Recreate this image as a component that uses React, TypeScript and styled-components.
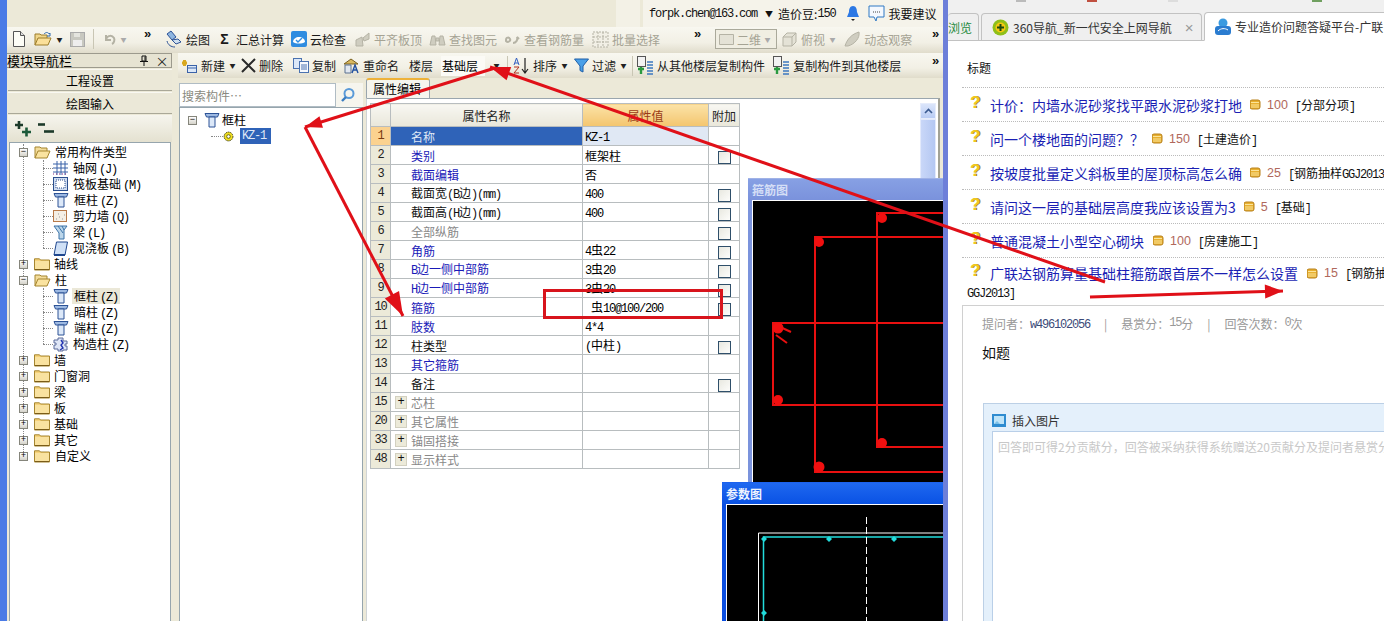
import React from "react";
import styled, { createGlobalStyle } from "styled-components";

const CJK = `"Noto Sans CJK SC", "Liberation Sans", sans-serif`;

const Global = createGlobalStyle`
  html, body { margin: 0; padding: 0; background: #fff; overflow: hidden; }
  body { font-family: ${CJK}; font-size: 12px; color: #000; }
  * { box-sizing: border-box; }
`;

const Page = styled.div`
  position: relative;
  display: flex;
  width: 1384px;
  height: 621px;
  overflow: hidden;
`;

const AppWindow = styled.div`
  position: relative;
  flex: 0 0 948px;
  display: flex;
  flex-direction: column;
  height: 621px;
  overflow: hidden;
  background: #ece9d8;
  border-left: 7px solid #4a7be6;
  border-right: 5px solid #6d7fd9;
`;

const TitleBar = styled.div`
  flex: 0 0 27px;
  display: flex;
  justify-content: flex-end;
  align-items: stretch;
`;

const TitleGhost = styled.div`
  width: 24px;
  margin-right: 3px;
  background: #f3f1e6;
`;

const Account = styled.div`
  width: 300px;
  padding: 0 6px;
  display: flex;
  align-items: center;
  background: #f5f3ea;
  color: #111;
  white-space: nowrap;
`;

const Latin = styled.span`
  font-family: "Liberation Mono", monospace;
  font-size: 12px;
  letter-spacing: -1.2px;
`;

const TreeKey = styled(Latin)`
  margin-left: 2px;
`;

const AccountCaret = styled.span`
  margin: 0 5px 0 8px;
  font-size: 8px;
`;

const AccountIcon = styled.span<{ $ml: number }>`
  display: inline-flex;
  margin-left: ${(p) => p.$ml}px;
  margin-right: 3px;
`;

const Toolbar = styled.div<{ $pad: number; $gap: number; $lift?: number }>`
  flex: 0 0 auto;
  display: flex;
  align-items: center;
  height: 26px;
  padding-left: ${(p) => p.$pad}px;
  padding-bottom: ${(p) => p.$lift ?? 0}px;
  gap: ${(p) => p.$gap}px;
  background: linear-gradient(#f8f7f0, #f2f0e5 60%, #e0dccb);
  white-space: nowrap;
  position: relative;
`;

const ToolItem = styled.span<{ $off?: boolean; $ml?: number }>`
  display: inline-flex;
  align-items: center;
  gap: 3px;
  height: 20px;
  margin-left: ${(p) => p.$ml ?? 0}px;
  color: ${(p) => (p.$off ? "#a5a394" : "#1a1a1a")};
`;

const SigmaGlyph = styled.span`
  flex: 0 0 11px;
  margin-right: 3px;
  font: 700 14px/14px "Liberation Sans", sans-serif;
  text-align: center;
`;

const Chevron = styled.span<{ $at: number; $top: number }>`
  position: absolute;
  left: ${(p) => p.$at}px;
  top: ${(p) => p.$top}px;
  font-size: 13px;
  font-weight: 700;
  line-height: 12px;
  color: #111;
  font-family: "Liberation Sans", sans-serif;
`;

const Caret = styled.span<{ $off?: boolean }>`
  flex: 0 0 7px;
  width: 7px;
  font-size: 6px;
  margin-left: 1px;
  text-align: center;
  color: ${(p) => (p.$off ? "#aaa" : "#222")};
`;

const ToolSep = styled.span<{ $ml?: number }>`
  width: 1px;
  height: 20px;
  margin-left: ${(p) => p.$ml ?? 0}px;
  background: #c9c6b4;
`;

const ViewSelect = styled.span`
  display: inline-flex;
  align-items: center;
  width: 62px;
  height: 20px;
  padding: 0 2px;
  gap: 2px;
  color: #a5a394;
  border: 1px solid #aaa99a;
  background: #f0eee2;
`;

const FloorBox = styled.span`
  display: inline-flex;
  align-items: center;
  width: 44px;
  height: 20px;
  margin-left: 1px;
  padding-left: 1px;
  background: #fbfaf5;
`;

const Body = styled.div`
  flex: 1;
  display: flex;
  min-height: 0;
`;

const Nav = styled.div`
  flex: 0 0 165px;
  display: flex;
  flex-direction: column;
`;

const NavHeader = styled.div`
  flex: 0 0 15px;
  display: flex;
  align-items: center;
  margin-bottom: 1px;
  padding-right: 0;
  border: 1px solid #9c9a8d;
  border-left: 0;
  font-size: 13px;
  line-height: 13px;
  background: #e6e3d2;
`;

const NavHeaderTitle = styled.span`
  flex: 1;
`;

const NavHeaderGlyph = styled.span`
  display: inline-flex;
  width: 18px;
  justify-content: center;
  color: #222;
`;

const NavButton = styled.div<{ $h: number }>`
  flex: 0 0 ${(p) => p.$h}px;
  margin-left: 1px;
  margin-bottom: 1px;
  display: flex;
  align-items: center;
  justify-content: center;
  font-size: 12px;
  background: #ebe8d8;
  border-bottom: 1px solid #aaa898;
  border-top: 1px solid #f9f8f2;
`;

const NavTools = styled.div`
  flex: 0 0 27px;
  margin-left: 1px;
  padding-left: 6px;
  display: flex;
  align-items: center;
  gap: 5px;
  background: linear-gradient(#f6f5ee, #e4e1d0);
`;

const TreeBox = styled.div`
  flex: 1;
  margin-left: 2px;
  margin-right: 1px;
  padding-top: 1px;
  background: #fff;
  border: 1px solid #96a5ad;
  border-bottom: 0;
`;

const TreeGroup = styled.div<{ $x: number }>`
  position: relative;
  &::before {
    content: "";
    position: absolute;
    left: ${(p) => p.$x}px;
    top: 0;
    bottom: 8px;
    border-left: 1px dotted #888;
  }
`;

const TreeRow = styled.div<{ $indent: number }>`
  position: relative;
  display: flex;
  align-items: center;
  height: 16px;
  padding-left: ${(p) => p.$indent}px;
  white-space: nowrap;
`;

const TreeBranch = styled.span<{ $len: number }>`
  width: ${(p) => p.$len}px;
  margin-left: -${(p) => p.$len}px;
  border-top: 1px dotted #888;
`;

const Expander = styled.span`
  flex: 0 0 9px;
  height: 9px;
  display: inline-flex;
  align-items: center;
  justify-content: center;
  position: relative;
  font: 9px/9px "Liberation Mono", monospace;
  background: linear-gradient(#fff, #d5d3ca);
  border: 1px solid #85857b;
  color: #000;
`;

const TreeLabel = styled.span<{ $ml: number; $hit?: boolean }>`
  margin-left: ${(p) => p.$ml}px;
  padding: 0 2px;
  height: 16px;
  line-height: 16px;
  background: ${(p) => (p.$hit ? "#ebe8d8" : "transparent")};
`;

const IconSlot = styled.span<{ $ml: number }>`
  display: inline-flex;
  margin-left: ${(p) => p.$ml}px;
`;

const Main = styled.div`
  flex: 1;
  display: flex;
  flex-direction: column;
  min-width: 0;
`;

const SecondToolbar = styled(Toolbar)`
  height: 25px;
  margin-left: 6px;
`;

const Workspace = styled.div`
  flex: 1;
  display: flex;
  min-height: 0;
`;

const Components = styled.div`
  flex: 0 0 184px;
  margin-left: 7px;
  margin-top: 5px;
  display: flex;
  flex-direction: column;
`;

const SearchRow = styled.div`
  flex: 0 0 24px;
  display: flex;
  align-items: center;
  background: #f6f5ee;
`;

const SearchInput = styled.div`
  width: 157px;
  height: 24px;
  padding-left: 2px;
  display: flex;
  align-items: center;
  color: #8a8a80;
  background: #fff;
  border: 1px solid #b0bcc4;
`;

const SearchButton = styled.span`
  margin-left: 4px;
  display: inline-flex;
`;

const ComponentTree = styled.div`
  flex: 1;
  padding-top: 4px;
  background: #fff;
  border: 1px solid #96a5ad;
  border-bottom: 0;
`;

const SelectedLabel = styled.span`
  margin-left: 6px;
  width: 31px;
  height: 16px;
  padding-left: 2px;
  display: flex;
  align-items: center;
  background: #2f63b8;
  color: #dfe8f6;
`;

const PropsPanel = styled.div`
  flex: 1;
  margin-left: 3px;
  margin-right: 3px;
  display: flex;
  flex-direction: column;
  min-width: 0;
`;

const TabRow = styled.div`
  flex: 0 0 20px;
  display: flex;
  align-items: flex-end;
`;

const PropsTab = styled.div`
  width: 64px;
  height: 20px;
  padding-left: 6px;
  line-height: 18px;
  background: #f6f5ee;
  border: 1px solid #9aa6ae;
  border-top: 2px solid #eeb23a;
  border-bottom: 0;
  border-radius: 3px 3px 0 0;
`;

const PropsBody = styled.div`
  position: relative;
  flex: 1;
  padding: 4px 0 0 3px;
  background: #fff;
  border-top: 1px solid #9aa6ae;
  border-left: 1px solid #d0d4d6;
  border-right: 2px solid #a2a296;
`;

const PropsTable = styled.table`
  width: 369px;
  table-layout: fixed;
  border-collapse: collapse;
  border: 1px solid #aab4ba;
  font-size: 12px;
  td, th {
    height: 19px;
    padding: 0;
    border: 1px solid #b8bdbf;
    font-weight: 400;
    overflow: hidden;
    white-space: nowrap;
  }
`;

const HeadCell = styled.th<{ $hot?: boolean }>`
  height: 23px !important;
  text-align: center;
  background: ${(p) => (p.$hot ? "linear-gradient(#fbe3a8, #f4c56e)" : "linear-gradient(#f8f7f2, #e9e7da)")};
  color: ${(p) => (p.$hot ? "#9a3b17" : "#222")};
`;

const NumCell = styled.td<{ $hot?: boolean }>`
  text-align: center;
  background: ${(p) => (p.$hot ? "#fbd28f" : "#ecead9")};
  font-family: "Liberation Mono", monospace;
  font-size: 12px;
  letter-spacing: -1.2px;
  color: ${(p) => (p.$hot ? "#7a3b10" : "#222")};
`;

const NameCell = styled.td<{ $tone: string; $sel?: boolean }>`
  padding-left: 20px !important;
  background: ${(p) => (p.$sel ? "#2f63b8" : "#fff")};
  color: ${(p) => (p.$sel ? "#dfe8f6" : p.$tone)};
`;

const NameInner = styled.span`
  display: flex;
  align-items: center;
  gap: 4px;
  margin-left: -16px;
`;

const PlusBox = styled.span`
  width: 12px;
  height: 13px;
  display: inline-flex;
  align-items: center;
  justify-content: center;
  font: 12px/12px "Liberation Mono", monospace;
  color: #111;
  background: #ecead9;
  border: 1px solid #d2d0c0;
`;

const ValueCell = styled.td<{ $sel?: boolean }>`
  padding-left: 2px !important;
  white-space: pre !important;
  background: ${(p) => (p.$sel ? "#e0e8f4" : "#fff")};
`;

const CheckCell = styled.td`
  text-align: center;
`;

const CheckBox = styled.span`
  display: inline-block;
  vertical-align: middle;
  width: 13px;
  height: 13px;
  background: linear-gradient(135deg, #e8e8e0, #fdfdfb);
  border: 1px solid #2f4f6a;
`;

const Scrollbar = styled.div`
  position: absolute;
  right: 2px;
  top: 4px;
  width: 16px;
  bottom: 0;
  display: flex;
  flex-direction: column;
  background: #f3f6fd;
`;

const ScrollArrow = styled.div`
  height: 16px;
  display: flex;
  align-items: center;
  justify-content: center;
  background: linear-gradient(#dbe5fb, #b9ccf4);
  border: 1px solid #e6ecfb;
`;

const ScrollThumb = styled.div`
  height: 66px;
  background: linear-gradient(90deg, #c9d7f8, #b4c7f2);
  border: 1px solid #e2e9fb;
`;

const FloatWindow = styled.div<{ $x: number; $y: number; $active?: boolean }>`
  position: absolute;
  left: ${(p) => p.$x}px;
  top: ${(p) => p.$y}px;
  right: -40px;
  bottom: -40px;
  padding: 0 4px 4px;
  background: ${(p) => (p.$active ? "#0a4ee0" : "#7b93dc")};
  border-top: 1px solid ${(p) => (p.$active ? "#1c62ee" : "#a0b2e6")};
`;

const FloatTitle = styled.div<{ $active?: boolean }>`
  height: 21px;
  display: flex;
  align-items: center;
  font-size: 12px;
  font-weight: 700;
  color: ${(p) => (p.$active ? "#eef3ff" : "#d4def6")};
  background: ${(p) => (p.$active ? "linear-gradient(#1f68f0, #0a52e4)" : "linear-gradient(#87a0e4, #7a92dc)")};
  margin: 0 -4px;
  padding-left: 4px;
`;

const FloatCanvas = styled.svg`
  display: block;
  background: #000;
  outline: 1px solid #fff;
  outline-offset: -1px;
`;

const Browser = styled.div`
  flex: 1;
  display: flex;
  flex-direction: column;
  min-width: 0;
  overflow: hidden;
  background: #fff;
`;

const BrowserStrip = styled.div`
  flex: 0 0 12px;
  background: #f0f0f0;
  position: relative;
`;

const StripTip = styled.span<{ $x: number; $c: string }>`
  position: absolute;
  left: ${(p) => p.$x}px;
  top: 0;
  width: 10px;
  height: 2px;
  background: ${(p) => p.$c};
`;

const TabStrip = styled.div`
  flex: 0 0 28px;
  display: flex;
  align-items: flex-end;
  gap: 2px;
  background: #f0f0f0;
  border-bottom: 1px solid #c2c2c2;
  white-space: nowrap;
`;

const BrowserTab = styled.div<{ $w: number; $on?: boolean; $green?: boolean }>`
  flex: 0 0 ${(p) => p.$w}px;
  padding-left: ${(p) => (p.$green ? 0 : 10)}px;
  display: flex;
  align-items: center;
  gap: 4px;
  overflow: hidden;
  font-size: 12px;
  color: ${(p) => (p.$green ? "#1e8a3c" : "#333")};
  background: ${(p) => (p.$on ? "#fff" : "#efefef")};
  border: 1px solid #c2c2c2;
  border-left: ${(p) => (p.$green ? 0 : "1px solid #c2c2c2")};
  border-bottom: ${(p) => (p.$on ? "1px solid #fff" : "0")};
  border-radius: 4px 4px 0 0;
  margin-bottom: ${(p) => (p.$on ? "-1px" : 0)};
  height: ${(p) => (p.$on ? "29px" : "27px")};
`;

const TabClose = styled.span`
  margin-left: 9px;
  font-size: 15px;
  color: #999;
  font-family: "Liberation Sans", sans-serif;
`;

const Content = styled.div`
  flex: 0 0 auto;
  width: 470px;
  padding-left: 14px;
`;

const ListHeader = styled.div`
  height: 47px;
  padding: 18px 0 0 5px;
  line-height: 17px;
  color: #111;
  border-bottom: 1px dotted #bbb;
`;

const QRow = styled.div<{ $last?: boolean }>`
  height: ${(p) => (p.$last ? 30 : 34)}px;
  display: flex;
  align-items: center;
  white-space: nowrap;
  padding-left: 8px;
  border-bottom: ${(p) => (p.$last ? "0" : "1px dotted #bbb")};
`;

const QMark = styled.span`
  flex: 0 0 20px;
  margin-top: -5px;
  font: 700 17px/17px "Liberation Sans", sans-serif;
  color: #f0c820;
  text-shadow: 1px 0 0 #8a7210;
`;

const QLink = styled.span`
  font-size: 14px;
  color: #1b1fb4;
`;

const Coin = styled.span<{ $ml: number }>`
  display: inline-flex;
  margin-left: ${(p) => p.$ml}px;
`;

const Score = styled.span`
  margin-left: 6px;
  font: 12.5px "Liberation Sans", sans-serif;
  color: #b0685c;
`;

const Category = styled.span`
  margin-left: 7px;
  color: #111;
`;

const WrapLine = styled.div`
  height: 20px;
  margin-top: -3px;
  padding-left: 5px;
  line-height: 14px;
  color: #111;
`;

const Answer = styled.div`
  height: 340px;
  padding: 9px 0 0 19px;
  border-top: 1px solid #d0d0d0;
  border-left: 1px solid #d0d0d0;
`;

const Meta = styled.div`
  display: flex;
  align-items: center;
  height: 16px;
  color: #999;
  white-space: pre;
`;

const MetaName = styled.span`
  color: #3b4a78;
`;

const MetaSep = styled.span`
  margin: 0 14px;
`;

const Ask = styled.div`
  margin-top: 11px;
  font-size: 14px;
  line-height: 20px;
  color: #111;
`;

const Reply = styled.div`
  margin-top: 41px;
  margin-left: 1px;
  height: 260px;
  padding: 0 0 0 8px;
  background: #e4f0fb;
  border: 1px solid #bcd0e6;
`;

const ReplyBar = styled.div`
  height: 27px;
  padding-top: 6px;
  display: flex;
  align-items: center;
  gap: 6px;
  color: #333;
`;

const ReplyBox = styled.div`
  height: 240px;
  padding: 6px 0 0 5px;
  line-height: 17px;
  color: #c8c8c8;
  background: #fff;
  border: 1px solid #b9cfe8;
  overflow: hidden;
  white-space: nowrap;
`;

const Overlay = styled.svg`
  position: absolute;
  left: 0;
  top: 0;
  pointer-events: none;
`;

const Callout = styled.div`
  position: absolute;
  left: 543px;
  top: 289px;
  width: 180px;
  height: 30px;
  border: 3px solid #d8141c;
`;

/* ---------- icons ---------- */

const Column = ({ s = 16 }: { s?: number }) => (
  <svg width={s} height={s} viewBox="0 0 16 16">
    <path d="M1 1.5h14l-1.5 3.5h-11z" fill="#9db9e2" stroke="#2c5296" />
    <path d="M5 5h6v10H5z" fill="#dce8f8" stroke="#2c5296" />
  </svg>
);

const Folder = () => (
  <svg width={16} height={14} viewBox="0 0 16 14">
    <path d="M.5 3V1.8h5l1 1.2h9v10H.5z" fill="#f6d27a" stroke="#a5852f" />
    <path d="M1 4h14v8H1z" fill="#f9e2a0" />
    <path d="M1 12h14v1H1z" fill="#7a5c18" />
  </svg>
);

const FolderOpen = () => (
  <svg width={17} height={14} viewBox="0 0 17 14">
    <path d="M1 13V2h5l1 1h6v3" fill="#f3dc9a" stroke="#a5852f" />
    <path d="M1 13l3-7h12l-3 7z" fill="#fae3a0" stroke="#a5852f" />
  </svg>
);

const AxisGrid = () => (
  <svg width={15} height={14} viewBox="0 0 15 14" stroke="#3a62a8" fill="none">
    <path d="M4 0v14M8 0v14M12 0v14M0 3h15M0 7h15M0 11h15" />
    <path d="M0 13h14" stroke="#8a2a80" strokeDasharray="1 2" />
  </svg>
);

const Raft = () => (
  <svg width={15} height={14} viewBox="0 0 15 14">
    <rect x=".5" y=".5" width="14" height="13" fill="#cfdcf0" stroke="#2c4f8e" />
    <rect x="3" y="3" width="9" height="8" fill="#fff" stroke="#2c4f8e" strokeDasharray="1 1" />
  </svg>
);

const Wall = () => (
  <svg width={15} height={14} viewBox="0 0 15 14">
    <rect x=".5" y="1.5" width="13" height="11" fill="#f4efe6" stroke="#b87a4a" />
    <path d="M3 10h1M6 8h1M9 10h1M11 6h1M5 5h1" stroke="#999" />
  </svg>
);

const Beam = () => (
  <svg width={15} height={15} viewBox="0 0 15 15">
    <path d="M1 1h13l-3 4v9H6V8z" fill="#bcd6ea" stroke="#3a72a8" />
    <path d="M5 1l5 7M9 1l2 4" stroke="#3a72a8" fill="none" />
  </svg>
);

const Slab = () => (
  <svg width={15} height={15} viewBox="0 0 15 15">
    <path d="M3.5 1h11l-2.5 13H1z" fill="#cfe0f6" stroke="#1f478e" />
    <path d="M1 14h11" stroke="#1f478e" strokeWidth="2" />
  </svg>
);

const Constructed = () => (
  <svg width={15} height={15} viewBox="0 0 15 15">
    <path d="M5 1h5v3h4v3h-2v2h2v4h-4v1H5v-2H1V8h2V6H1V3h4z" fill="#dfe6f6" stroke="#5a6a9a" />
    <path d="M8 3l2 3-2 2 2 3-3 2" stroke="#2233b0" fill="none" strokeWidth="1.4" />
  </svg>
);

const Gear = () => (
  <svg width={11} height={11} viewBox="0 0 11 11">
    <circle cx="5.5" cy="5.5" r="4.4" fill="#f2e020" stroke="#3a3a10" strokeDasharray="1.4 0.8" />
    <circle cx="5.5" cy="5.5" r="1.8" fill="#fff" stroke="#6a6a10" />
  </svg>
);

const Plus = ({ minus }: { minus?: boolean }) => (
  <svg width={18} height={17} viewBox="0 0 18 17">
    {minus ? (
      <>
        <path d="M1 4.5h7" stroke="#1d3a2a" strokeWidth="2.6" />
        <path d="M7 11.5h10" stroke="#1d3a2a" strokeWidth="2.6" />
      </>
    ) : (
      <>
        <path d="M1 5h8M5 1v8" stroke="#1d3a2a" strokeWidth="2.6" />
        <path d="M8 12h9M12.5 7.5v9" stroke="#1d5a3a" strokeWidth="2.6" />
      </>
    )}
  </svg>
);

const Pin = () => (
  <svg width={10} height={12} viewBox="0 0 10 12" fill="none" stroke="#111">
    <path d="M3 1h4v5H3zM1 6.5h8M5 7v4" />
    <path d="M6 1.5v4" />
  </svg>
);

const Page16 = () => (
  <svg width={14} height={16} viewBox="0 0 14 16">
    <path d="M1.5.5h7l4 4v11h-11z" fill="#fdfdf6" stroke="#555" />
    <path d="M8.5.5v4h4" fill="#ddd" stroke="#555" />
  </svg>
);

const OpenDoc = () => (
  <svg width={18} height={16} viewBox="0 0 18 16">
    <path d="M1 14V3h5l1 1h6v3" fill="#f0d68a" stroke="#9c7d2a" />
    <path d="M1 14l3-7h13l-3 7z" fill="#fbe09a" stroke="#9c7d2a" />
    <path d="M10 3c2-2 4-2 5 0l1-1v3h-3" stroke="#2f6ab0" fill="none" />
  </svg>
);

const Floppy = () => (
  <svg width={15} height={15} viewBox="0 0 15 15">
    <rect x=".5" y=".5" width="14" height="14" fill="#c8c8c0" stroke="#aaa" />
    <rect x="3" y="8" width="9" height="6" fill="#eee" />
    <rect x="4" y="1" width="6" height="4" fill="#e4e4de" />
  </svg>
);

const Undo = () => (
  <svg width={14} height={14} viewBox="0 0 14 14" fill="none" stroke="#b4b2a4" strokeWidth="2">
    <path d="M4 3v5h5M4 7c2-4 6-4 8-1 1 2 0 5-2 6" />
  </svg>
);

const DrawTool = () => (
  <svg width={18} height={18} viewBox="0 0 18 18">
    <path d="M2 4l4-3 5 6-4 3z" fill="#8fb6e0" stroke="#2c5296" />
    <path d="M7 10l4 4 5-2-3-3z" fill="#cfe0f0" stroke="#2c5296" />
    <path d="M2 11c1 4 4 6 8 6" stroke="#2c5296" fill="none" />
  </svg>
);

const CloudCheck = () => (
  <svg width={16} height={16} viewBox="0 0 16 16">
    <rect width="16" height="16" rx="2" fill="#2f8ce0" />
    <path d="M2 11c0-3 3-5 6-5s6 2 6 5c-3 2-9 2-12 0z" fill="#fff" />
    <path d="M5 9l2 2 4-4" stroke="#2f8ce0" strokeWidth="1.4" fill="none" />
  </svg>
);

const Ghost = ({ kind }: { kind: "roof" | "bino" | "link" | "grid" | "box" | "orbit" | "panel" }) => (
  <svg width={17} height={17} viewBox="0 0 17 17" fill="#cfcdc0" stroke="#b5b3a5">
    {kind === "roof" && <path d="M2 15V9l6-3 1 9zM9 7l6-5v6l-5 2z" />}
    {kind === "bino" && <path d="M1 14l2-9h3l1 9zM10 14l1-9h3l2 9zM7 7h3v3H7z" />}
    {kind === "link" && <path d="M2 9c0-3 3-3 4-1 1 2-2 4-4 2zM9 12c3 0 5-3 4-6l2 2" fill="none" strokeWidth="2" />}
    {kind === "grid" && <path d="M1 1h15v15H1zM1 6h15M1 11h15M6 1v15M11 1v15" fill="#f2f0e6" strokeDasharray="2 1" />}
    {kind === "box" && <path d="M2 6l4-4h9v9l-4 4H2zM2 6h9v9M11 6l4-4" fill="#e4e2d6" />}
    {kind === "orbit" && <path d="M1 15C3 8 8 3 15 1c1 6-4 12-11 14z" />}
    {kind === "panel" && <path d="M1.5 3.5h14v10h-14z" fill="#e4e2d6" />}
  </svg>
);

const Bell = () => (
  <svg width={14} height={17} viewBox="0 0 14 17">
    <path d="M7 1c3 0 4 3 4 6l2 5H1l2-5c0-3 1-6 4-6z" fill="#2c78e4" />
    <path d="M5 14h4l-2 2z" fill="#222" />
  </svg>
);

const Speech = () => (
  <svg width={17} height={17} viewBox="0 0 17 17">
    <path d="M1 1h15v11h-7l-1 4-2-4H1z" fill="#f4f8fe" stroke="#2f78c4" />
    <path d="M5 7h7" stroke="#444" strokeDasharray="1 1" />
  </svg>
);

const NewItem = () => (
  <svg width={18} height={17} viewBox="0 0 18 17">
    <path d="M2 6h5M4.5 3v6" stroke="#d8a820" strokeWidth="3" />
    <rect x="7.5" y="8.5" width="9" height="7" fill="#dce8f8" stroke="#3a62a8" />
    <path d="M8 11h8" stroke="#3a62a8" />
  </svg>
);

const BigX = () => (
  <svg width={15} height={15} viewBox="0 0 15 15">
    <path d="M1 1l13 13M14 1L1 14" stroke="#2a2a2a" strokeWidth="2" />
  </svg>
);

const CopyIcon = () => (
  <svg width={16} height={15} viewBox="0 0 16 15">
    <rect x=".5" y=".5" width="8" height="10" fill="#dce8f8" stroke="#4a72b0" />
    <rect x="6.5" y="3.5" width="9" height="11" fill="#f6f9fe" stroke="#4a72b0" />
    <path d="M8 7h6M8 9h6M8 11h6" stroke="#4a72b0" />
  </svg>
);

const Rename = () => (
  <svg width={17} height={17} viewBox="0 0 17 17">
    <path d="M1 7l7-5 7 5z" fill="#d8b860" stroke="#7a6020" />
    <path d="M2 8h6v8H2z" fill="#e2e8f0" stroke="#5a7090" />
    <path d="M9 16l3-8 3 8M10 13h4" stroke="#1f4fa0" strokeWidth="1.4" fill="none" />
  </svg>
);

const SortIcon = () => (
  <svg width={17} height={17} viewBox="0 0 17 17" fill="none">
    <path d="M1 8l2.5-7L6 8M2 6h3" stroke="#2f5cc0" />
    <path d="M1 10h5L1 16h5" stroke="#b03020" />
    <path d="M12 1v14M9 12l3 4 3-4" stroke="#222" strokeWidth="1.2" />
  </svg>
);

const Funnel = () => (
  <svg width={15} height={15} viewBox="0 0 15 15">
    <path d="M.5 1h14L9 8v6l-3-1.5V8z" fill="#4aa0e8" stroke="#1f5fa8" />
  </svg>
);

const CopyFloor = () => (
  <svg width={18} height={19} viewBox="0 0 18 19">
    <rect x="1.5" y=".5" width="8" height="10" fill="#f2f2f2" stroke="#555" />
    <path d="M2 13h6M5 11v7" stroke="#2a9a40" strokeWidth="2.4" />
    <path d="M11 6h6M11 9h6M11 12h6M11 15h6M11 18h6" stroke="#3c78c0" strokeWidth="1.6" />
  </svg>
);

const Glass = () => (
  <svg width={16} height={16} viewBox="0 0 16 16" fill="none">
    <circle cx="9" cy="6.5" r="4.5" stroke="#5a9ad8" strokeWidth="2" />
    <path d="M6 10l-4 4" stroke="#3a7cc0" strokeWidth="2.4" />
  </svg>
);

const Badge360 = () => (
  <svg width={17} height={17} viewBox="0 0 17 17">
    <circle cx="8.5" cy="8.5" r="8" fill="#8fbf18" />
    <circle cx="8.5" cy="8.5" r="5" fill="#f5c810" />
    <path d="M8.5 5v7M5 8.5h7" stroke="#1c4a10" strokeWidth="2" />
  </svg>
);

const BadgeGld = () => (
  <svg width={16} height={17} viewBox="0 0 16 17">
    <circle cx="8" cy="5" r="4.5" fill="#3a9ae0" />
    <rect y="8" width="16" height="9" rx="3" fill="#2a7cd0" />
    <path d="M3 13c3-3 7-3 10-1" stroke="#fff" fill="none" />
  </svg>
);

const CoinStack = () => (
  <svg width={11} height={11} viewBox="0 0 11 11">
    <rect y="1" width="10" height="9" rx="2" fill="#e8b030" />
    <path d="M1 3.5h8M1 6h8M1 8h8" stroke="#fbe49a" />
    <rect y="1" width="10" height="9" rx="2" fill="none" stroke="#b8801a" />
  </svg>
);

const PicIcon = () => (
  <svg width={14} height={13} viewBox="0 0 14 13">
    <rect width="14" height="13" fill="#2f8cd0" />
    <rect x="2" y="2" width="10" height="8" fill="#bfe4f8" />
    <path d="M2 10l3-3 3 3" fill="#7cc0e8" />
  </svg>
);

/* ---------- annotation arrows ---------- */

const arrowHead = (x1: number, y1: number, x2: number, y2: number, len: number, half: number) => {
  const d = Math.hypot(x2 - x1, y2 - y1);
  const ux = (x2 - x1) / d;
  const uy = (y2 - y1) / d;
  const bx = x2 - ux * len;
  const by = y2 - uy * len;
  return `${x2},${y2} ${bx - uy * half},${by + ux * half} ${bx + uy * half},${by - ux * half}`;
};

const arrows = [
  { a: [1105, 282, 490, 67], len: 20, half: 7 },
  { a: [495, 68, 305, 127], len: 17, half: 6 },
  { a: [305, 127, 403, 316], len: 24, half: 8 },
  { a: [1090, 297, 1283, 291], len: 18, half: 7 },
];

/* ---------- data ---------- */

const BLUE = "#1a1ab8";
const GRAY = "#888";
const BLACK = "#111";

type Prop = { n: number; name: string; tone: string; value?: string; check?: boolean; expand?: boolean };

const props: Prop[] = [
  { n: 1, name: "名称", tone: BLUE, value: "KZ-1" },
  { n: 2, name: "类别", tone: BLUE, value: "框架柱", check: true },
  { n: 3, name: "截面编辑", tone: BLUE, value: "否" },
  { n: 4, name: "截面宽(B边)(mm)", tone: BLACK, value: "400", check: true },
  { n: 5, name: "截面高(H边)(mm)", tone: BLACK, value: "400", check: true },
  { n: 6, name: "全部纵筋", tone: GRAY, check: true },
  { n: 7, name: "角筋", tone: BLUE, value: "4虫22", check: true },
  { n: 8, name: "B边一侧中部筋", tone: BLUE, value: "3虫20", check: true },
  { n: 9, name: "H边一侧中部筋", tone: BLUE, value: "3虫20", check: true },
  { n: 10, name: "箍筋", tone: BLUE, value: " 虫10@100/200", check: true },
  { n: 11, name: "肢数", tone: BLUE, value: "4*4" },
  { n: 12, name: "柱类型", tone: BLACK, value: "(中柱)", check: true },
  { n: 13, name: "其它箍筋", tone: BLUE },
  { n: 14, name: "备注", tone: BLACK, check: true },
  { n: 15, name: "芯柱", tone: GRAY, expand: true },
  { n: 20, name: "其它属性", tone: GRAY, expand: true },
  { n: 33, name: "锚固搭接", tone: GRAY, expand: true },
  { n: 48, name: "显示样式", tone: GRAY, expand: true },
];

const questions = [
  { t: "计价：内墙水泥砂浆找平跟水泥砂浆打地", s: "100", c: "[分部分项]", gap: 8 },
  { t: "问一个楼地面的问题？？", s: "150", c: "[土建造价]", gap: 8 },
  { t: "按坡度批量定义斜板里的屋顶标高怎么确", s: "25", c: "[钢筋抽样GGJ2013]", gap: 8 },
  { t: "请问这一层的基础层高度我应该设置为3", s: "5", c: "[基础]", gap: 8 },
  { t: "普通混凝土小型空心砌块", s: "100", c: "[房建施工]", gap: 9 },
];

/* Text in the reference mixes a wide CJK face with a narrow Latin one. */
const Mixed = ({ text }: { text?: string }) => (
  <>
    {(text ?? "").split(/([\x00-\x7f]+)/).map((part, i) =>
      i % 2 === 1 ? <Latin key={i}>{part}</Latin> : part,
    )}
  </>
);

const Child = ({ icon, zh, k, hit }: { icon: React.ReactNode; zh: string; k: string; hit?: boolean }) => (
  <TreeRow $indent={43}>
    <TreeBranch $len={10} />
    {icon}
    <TreeLabel $ml={3} $hit={hit}>
      {zh}
      <TreeKey>({k})</TreeKey>
    </TreeLabel>
  </TreeRow>
);

const Top = ({ zh, open, ml = 2 }: { zh: string; open?: boolean; ml?: number }) => (
  <TreeRow $indent={9}>
    <Expander>{open ? "−" : "+"}</Expander>
    <IconSlot $ml={6}>{open ? <FolderOpen /> : <Folder />}</IconSlot>
    <TreeLabel $ml={ml}>{zh}</TreeLabel>
  </TreeRow>
);

export default function App() {
  return (
    <>
      <Global />
      <Page>
        <AppWindow>
          <TitleBar>
            <TitleGhost />
            <Account>
              <Latin>forpk.chen@163.com</Latin>
              <AccountCaret>▼</AccountCaret>
              造价豆:<Latin>150</Latin>
              <AccountIcon $ml={11}>
                <Bell />
              </AccountIcon>
              <AccountIcon $ml={5}>
                <Speech />
              </AccountIcon>
              我要建议
            </Account>
          </TitleBar>

          <Toolbar $pad={5} $gap={8} $lift={2}>
            <ToolItem><Page16 /></ToolItem>
            <ToolItem><OpenDoc /><Caret>▼</Caret></ToolItem>
            <ToolItem $ml={-1}><Floppy /></ToolItem>
            <ToolSep />
            <ToolItem><Undo /><Caret $off>▼</Caret></ToolItem>
            <ToolItem $ml={30}><DrawTool />绘图</ToolItem>
            <ToolItem $ml={1}><SigmaGlyph>Σ</SigmaGlyph>汇总计算</ToolItem>
            <ToolItem $ml={-1}><CloudCheck />云检查</ToolItem>
            <ToolItem $off><Ghost kind="roof" />平齐板顶</ToolItem>
            <ToolItem $off $ml={-1}><Ghost kind="bino" />查找图元</ToolItem>
            <ToolItem $off $ml={-1}><Ghost kind="link" />查看钢筋量</ToolItem>
            <ToolItem $off><Ghost kind="grid" />批量选择</ToolItem>
            <ToolItem $off $ml={47}>
              <ViewSelect><Ghost kind="panel" />二维<Caret $off>▼</Caret></ViewSelect>
            </ToolItem>
            <ToolItem $off $ml={-4}><Ghost kind="box" />俯视<Caret $off>▼</Caret></ToolItem>
            <ToolItem $off><Ghost kind="orbit" />动态观察</ToolItem>
            <Chevron $at={137} $top={1}>»</Chevron>
            <Chevron $at={687} $top={1}>»</Chevron>
            <Chevron $at={925} $top={1}>»</Chevron>
          </Toolbar>

          <Body>
            <Nav>
              <NavHeader>
                <NavHeaderTitle>模块导航栏</NavHeaderTitle>
                <NavHeaderGlyph><Pin /></NavHeaderGlyph>
                <NavHeaderGlyph>×</NavHeaderGlyph>
              </NavHeader>
              <NavButton $h={22}>工程设置</NavButton>
              <NavButton $h={22}>绘图输入</NavButton>
              <NavTools>
                <Plus />
                <Plus minus />
              </NavTools>
              <TreeBox>
                <TreeGroup $x={13}>
                  <Top zh="常用构件类型" open />
                  <TreeGroup $x={33}>
                    <Child icon={<AxisGrid />} zh="轴网" k="J" />
                    <Child icon={<Raft />} zh="筏板基础" k="M" />
                    <Child icon={<Column />} zh="框柱" k="Z" />
                    <Child icon={<Wall />} zh="剪力墙" k="Q" />
                    <Child icon={<Beam />} zh="梁" k="L" />
                    <Child icon={<Slab />} zh="现浇板" k="B" />
                  </TreeGroup>
                  <Top zh="轴线" />
                  <Top zh="柱" open />
                  <TreeGroup $x={33}>
                    <Child icon={<Column />} zh="框柱" k="Z" hit />
                    <Child icon={<Column />} zh="暗柱" k="Z" />
                    <Child icon={<Column />} zh="端柱" k="Z" />
                    <Child icon={<Constructed />} zh="构造柱" k="Z" />
                  </TreeGroup>
                  <Top zh="墙" />
                  <Top zh="门窗洞" />
                  <Top zh="梁" />
                  <Top zh="板" />
                  <Top zh="基础" />
                  <Top zh="其它" />
                  <Top zh="自定义" ml={3} />
                </TreeGroup>
              </TreeBox>
            </Nav>

            <Main>
              <SecondToolbar $pad={2} $gap={7}>
                <ToolItem><NewItem />新建<Caret>▼</Caret></ToolItem>
                <ToolItem $ml={-2}><BigX />删除</ToolItem>
                <ToolItem $ml={3}><CopyIcon />复制</ToolItem>
                <ToolItem><Rename />重命名</ToolItem>
                <ToolItem $ml={3}>楼层</ToolItem>
                <FloorBox>基础层</FloorBox>
                <Caret>▼</Caret>
                <ToolSep />
                <ToolItem $ml={-2}><SortIcon />排序<Caret>▼</Caret></ToolItem>
                <ToolItem $ml={-1}><Funnel />过滤<Caret>▼</Caret></ToolItem>
                <ToolSep $ml={-2} />
                <ToolItem $ml={-4}><CopyFloor />从其他楼层复制构件</ToolItem>
                <ToolItem><CopyFloor />复制构件到其他楼层</ToolItem>
                <Chevron $at={754} $top={2}>»</Chevron>
              </SecondToolbar>

              <Workspace>
                <Components>
                  <SearchRow>
                    <SearchInput>搜索构件…</SearchInput>
                    <SearchButton><Glass /></SearchButton>
                  </SearchRow>
                  <ComponentTree>
                    <TreeRow $indent={8}>
                      <Expander>−</Expander>
                      <IconSlot $ml={7}><Column /></IconSlot>
                      <TreeLabel $ml={0}>框柱</TreeLabel>
                    </TreeRow>
                    <TreeRow $indent={43}>
                      <TreeBranch $len={12} />
                      <Gear />
                      <SelectedLabel><Latin>KZ-1</Latin></SelectedLabel>
                    </TreeRow>
                  </ComponentTree>
                </Components>

                <PropsPanel>
                  <TabRow>
                    <PropsTab>属性编辑</PropsTab>
                  </TabRow>
                  <PropsBody>
                    <PropsTable>
                      <colgroup>
                        <col width="20" />
                        <col width="192" />
                        <col width="126" />
                        <col width="31" />
                      </colgroup>
                      <thead>
                        <tr>
                          <HeadCell />
                          <HeadCell>属性名称</HeadCell>
                          <HeadCell $hot>属性值</HeadCell>
                          <HeadCell>附加</HeadCell>
                        </tr>
                      </thead>
                      <tbody>
                        {props.map((p) => (
                          <tr key={p.n}>
                            <NumCell $hot={p.n === 1}>{p.n}</NumCell>
                            <NameCell $tone={p.tone} $sel={p.n === 1}>
                              {p.expand ? (
                                <NameInner>
                                  <PlusBox>+</PlusBox>
                                  {p.name}
                                </NameInner>
                              ) : (
                                <Mixed text={p.name} />
                              )}
                            </NameCell>
                            <ValueCell $sel={p.n === 1}><Mixed text={p.value} /></ValueCell>
                            <CheckCell>{p.check && <CheckBox />}</CheckCell>
                          </tr>
                        ))}
                      </tbody>
                    </PropsTable>
                    <Scrollbar>
                      <ScrollArrow>
                        <svg width={9} height={6} viewBox="0 0 9 6" fill="none">
                          <path d="M1 5l3.5-3.5L8 5" stroke="#3a5a90" strokeWidth="1.6" />
                        </svg>
                      </ScrollArrow>
                      <ScrollThumb />
                    </Scrollbar>
                  </PropsBody>
                </PropsPanel>
              </Workspace>
            </Main>
          </Body>

          <FloatWindow $x={741} $y={178}>
            <FloatTitle>箍筋图</FloatTitle>
            <FloatCanvas width={240} height={300} viewBox="752 200 240 300">
              <g fill="none" stroke="#e81010" strokeWidth="2">
                <path d="M1000 237H815v235h185" />
                <path d="M1000 213H877v234h123" />
                <path d="M1000 323H773v82h227" />
                <path d="M778 326l13 6M776 335l11 8" />
              </g>
              <g fill="#f01010">
                <circle cx="819" cy="242" r="5" />
                <circle cx="819" cy="467" r="5.5" />
                <circle cx="882" cy="218" r="5" />
                <circle cx="882" cy="443" r="5" />
                <circle cx="778" cy="328" r="5.5" />
                <circle cx="778" cy="400" r="5" />
              </g>
            </FloatCanvas>
          </FloatWindow>

          <FloatWindow $x={715} $y={482} $active>
            <FloatTitle $active>参数图</FloatTitle>
            <FloatCanvas width={260} height={130} viewBox="726 503 260 130">
              <path d="M1000 532H758.5V640" fill="none" stroke="#fff" />
              <path d="M1000 536H763.5V640" fill="none" stroke="#22dcdc" strokeWidth="1.5" />
              <path d="M866.5 516V640" stroke="#fff" strokeDasharray="7 3" />
              <g fill="#22dcdc">
                <path d="M764 535l3 3-3 3-3-3z" />
                <path d="M829 535l3 3-3 3-3-3z" />
                <path d="M894 535l3 3-3 3-3-3z" />
                <path d="M764 609l3 3-3 3-3-3z" />
              </g>
            </FloatCanvas>
          </FloatWindow>
        </AppWindow>

        <Browser>
          <BrowserStrip>
            <StripTip $x={68} $c="#bbb" />
            <StripTip $x={139} $c="#c05040" />
            <StripTip $x={220} $c="#ddd" />
            <StripTip $x={364} $c="#70a060" />
          </BrowserStrip>
          <TabStrip>
            <BrowserTab $w={31} $green>浏览</BrowserTab>
            <BrowserTab $w={221}>
              <Badge360 />
              360导航_新一代安全上网导航
              <TabClose>×</TabClose>
            </BrowserTab>
            <BrowserTab $w={190} $on>
              <BadgeGld />
              专业造价问题答疑平台-广联
            </BrowserTab>
          </TabStrip>
          <Content>
            <ListHeader>标题</ListHeader>
            {questions.map((q) => (
              <QRow key={q.t}>
                <QMark>?</QMark>
                <QLink>{q.t}</QLink>
                <Coin $ml={q.gap}><CoinStack /></Coin>
                <Score>{q.s}</Score>
                <Category><Mixed text={q.c} /></Category>
              </QRow>
            ))}
            <QRow $last>
              <QMark>?</QMark>
              <QLink>广联达钢筋算量基础柱箍筋跟首层不一样怎么设置</QLink>
              <Coin $ml={9}><CoinStack /></Coin>
              <Score>15</Score>
              <Category><Mixed text="[钢筋抽" /></Category>
            </QRow>
            <WrapLine>
              <Latin>GGJ2013]</Latin>
            </WrapLine>
            <Answer>
              <Meta>
                提问者：<MetaName><Latin>w496102056</Latin></MetaName>
                <MetaSep>|</MetaSep>
                悬赏分：<Latin>15</Latin>分
                <MetaSep>|</MetaSep>
                回答次数：<Latin>0</Latin>次
              </Meta>
              <Ask>如题</Ask>
              <Reply>
                <ReplyBar><PicIcon />插入图片</ReplyBar>
                <ReplyBox>回答即可得2分贡献分，回答被采纳获得系统赠送20贡献分及提问者悬赏分</ReplyBox>
              </Reply>
            </Answer>
          </Content>
        </Browser>

        <Callout />
        <Overlay width={1384} height={621} viewBox="0 0 1384 621">
          {arrows.map(({ a: [x1, y1, x2, y2], len, half }) => (
            <g key={`${x1}-${y1}`}>
              <line x1={x1} y1={y1} x2={x2} y2={y2} stroke="#e01018" strokeWidth="3" />
              <polygon points={arrowHead(x1, y1, x2, y2, len, half)} fill="#e01018" />
            </g>
          ))}
        </Overlay>
      </Page>
    </>
  );
}
